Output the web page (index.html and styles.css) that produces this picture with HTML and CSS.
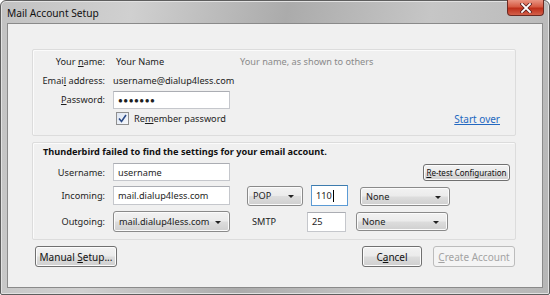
FILE: index.html
```html
<!DOCTYPE html>
<html lang="en">
<head>
  <meta charset="UTF-8">
  <meta name="viewport" content="width=device-width, initial-scale=1.0">
  <title>Mail Account Setup</title>
  <link rel="stylesheet" href="styles.css">
</head>
<body>
  <div class="window">
    <div class="titlebar">
      <div class="title">Mail Account Setup</div>
      <div class="close-btn">
        <svg width="12" height="10" viewBox="0 0 12 10">
          <path d="M2 1 L10 9 M10 1 L2 9" stroke="#5a2020" stroke-width="3.4" stroke-linecap="square"/>
          <path d="M2 1 L10 9 M10 1 L2 9" stroke="#fff" stroke-width="1.8" stroke-linecap="square"/>
        </svg>
      </div>
    </div>

    <div class="client">
      <div class="group identity">
        <div class="row">
          <div class="label">Your <u>n</u>ame:</div>
          <div class="value name-value">Your Name</div>
          <div class="hint">Your name, as shown to others</div>
        </div>
        <div class="row">
          <div class="label">Emai<u>l</u> address:</div>
          <div class="value">username@dialup4less.com</div>
        </div>
        <div class="row">
          <div class="label"><u>P</u>assword:</div>
          <div class="textbox password">&#9679;&#9679;&#9679;&#9679;&#9679;&#9679;&#9679;</div>
        </div>
        <div class="row">
          <div class="label"></div>
          <div class="checkbox">
            <svg width="9" height="9" viewBox="0 0 9 9">
              <path d="M1 4.5 L3.5 7.5 L8 1" fill="none" stroke="#2b4a86" stroke-width="1.6"/>
            </svg>
          </div>
          <div class="check-label">Re<u>m</u>ember password</div>
          <a class="start-over" href="#">Start over</a>
        </div>
      </div>

      <div class="group settings">
        <div class="message">Thunderbird failed to find the settings for your email account.</div>
        <div class="row row-user">
          <div class="label">Username:</div>
          <div class="textbox user">username</div>
          <div class="button retest"><span><u>R</u>e-test Configuration</span></div>
        </div>
        <div class="row row-in">
          <div class="label">Incoming:</div>
          <div class="textbox server">mail.dialup4less.com</div>
          <div class="dropdown proto">POP<span class="arrow"></span></div>
          <div class="textbox port focused">110<span class="caret"></span></div>
          <div class="dropdown ssl-in">None<span class="arrow"></span></div>
        </div>
        <div class="row row-out">
          <div class="label">Outgoing:</div>
          <div class="dropdown server-out">mail.dialup4less.com<span class="arrow"></span></div>
          <div class="smtp">SMTP</div>
          <div class="textbox port-out">25</div>
          <div class="dropdown ssl-out">None<span class="arrow"></span></div>
        </div>
      </div>

      <div class="buttons">
        <div class="button manual"><span>Manual <u>S</u>etup...</span></div>
        <div class="button cancel"><span>C<u>a</u>ncel</span></div>
        <div class="button create disabled"><span><u>C</u>reate Account</span></div>
      </div>
    </div>
  </div>
</body>
</html>
```

FILE: styles.css
```css
body {
  margin: 0;
  padding: 0;
  font-family: "Noto Sans", "Liberation Sans", sans-serif;
  font-size: 9.2px;
  color: #1e1e1e;
  background: #fff;
}

.window {
  width: 550px;
  height: 295px;
  box-sizing: border-box;
  border: 1px solid #5e5e5e;
  border-radius: 6px 6px 2px 2px;
  background: linear-gradient(100deg, #c2c2c2 0%, #d0d0d0 22%, #ababab 48%, #c6c6c6 72%, #b6b6b6 100%);
  box-shadow: inset 0 0 0 1px #e2e2e2;
}

.titlebar {
  height: 22px;
  display: flex;
  align-items: flex-start;
  justify-content: space-between;
}

.title {
  padding: 5px 0 0 6px;
  font-size: 10.2px;
  color: #111;
}

.close-btn {
  width: 37px;
  height: 16px;
  margin-right: 5px;
  margin-top: -1px;
  box-sizing: border-box;
  border: 1px solid #6b2a22;
  border-top: none;
  border-radius: 0 0 4px 4px;
  background: linear-gradient(#e99583 0%, #d65a43 45%, #be2f1a 55%, #d3604a 100%);
  display: flex;
  align-items: center;
  justify-content: center;
}

.client {
  margin: 0 6px 0 6px;
  height: 265px;
  box-sizing: border-box;
  border: 1px solid #8a8a8a;
  background: #f0f0f0;
  padding-top: 25px;
}

.group {
  margin-left: 24px;
  width: 484px;
  box-sizing: border-box;
  border: 1px solid #dcdcdc;
  box-shadow: inset 1px 1px 0 #fbfbfb;
  border-radius: 2px;
}

.identity {
  height: 87px;
  padding-top: 2px;
}

.settings {
  margin-top: 6px;
  height: 98px;
}

.row {
  display: flex;
  align-items: center;
  height: 19px;
}

.label {
  width: 72px;
  flex-shrink: 0;
  text-align: right;
  margin-right: 8px;
}

.value {
  color: #222;
}

.name-value {
  margin-left: 3px;
  width: 124px;
}

.hint {
  color: #8a8a8a;
}

.textbox {
  box-sizing: border-box;
  height: 18px;
  border: 1px solid #c5c7cc;
  border-top-color: #abadb3;
  background: #fff;
  padding: 0 4px;
  display: flex;
  align-items: center;
}

.password {
  width: 117px;
  font-size: 8px;
  letter-spacing: 0.5px;
}

.checkbox {
  width: 11px;
  height: 11px;
  margin-left: 3px;
  border: 1px solid #8f8f8f;
  background: linear-gradient(135deg, #dde5f2, #f6f8fb);
  display: flex;
  align-items: center;
  justify-content: center;
}

.check-label {
  margin-left: 5px;
}

.start-over {
  margin-left: auto;
  margin-right: 15px;
  font-size: 10px;
  color: #2468c0;
}

.message {
  height: 18px;
  line-height: 18px;
  padding-left: 10px;
  font-weight: bold;
  color: #111;
}

.row-user {
  margin-top: 2px;
  height: 18px;
}

.row-in {
  margin-top: 4px;
  height: 21px;
}

.row-out {
  margin-top: 5px;
  height: 21px;
}

.user,
.server {
  width: 117px;
}

.server {
  height: 19px;
}

.button {
  box-sizing: border-box;
  border: 1px solid #707070;
  border-radius: 3px;
  background: linear-gradient(#f2f2f2 0%, #ebebeb 48%, #dddddd 52%, #cfcfcf 100%);
  box-shadow: inset 0 0 0 1px #fcfcfc;
  display: flex;
  align-items: center;
  justify-content: center;
  color: #111;
}

.retest {
  margin-left: auto;
  margin-right: 5px;
  width: 87px;
  height: 17px;
  font-size: 8px;
}

.dropdown {
  position: relative;
  box-sizing: border-box;
  border: 1px solid #8a8a8a;
  border-radius: 3px;
  background: linear-gradient(#f2f2f2 0%, #ebebeb 48%, #dddddd 52%, #cfcfcf 100%);
  box-shadow: inset 0 0 0 1px #fbfbfb;
  display: flex;
  align-items: center;
  padding-left: 5px;
  color: #222;
}

.arrow {
  position: absolute;
  right: 8px;
  top: 50%;
  margin-top: -1px;
  border-left: 3px solid transparent;
  border-right: 3px solid transparent;
  border-top: 3px solid #222;
}

.proto {
  margin-left: 17px;
  width: 56px;
  height: 20px;
}

.port {
  margin-left: 8px;
  width: 37px;
  height: 21px;
}

.focused {
  border-color: #5b9bd5;
  border-top-color: #3d7bad;
}

.caret {
  width: 1px;
  height: 12px;
  background: #000;
  margin-left: 1px;
}

.ssl-in {
  margin-left: 12px;
  width: 90px;
  height: 19px;
  margin-top: 2px;
}

.server-out {
  width: 117px;
  height: 21px;
}

.smtp {
  margin-left: 22px;
  width: 55px;
}

.port-out {
  width: 39px;
  height: 20px;
}

.ssl-out {
  margin-left: 10px;
  width: 92px;
  height: 19px;
}

.buttons {
  display: flex;
  margin-top: 6px;
  padding-left: 27px;
}

.buttons .button {
  height: 21px;
  font-size: 10px;
}

.manual {
  width: 82px;
}

.cancel {
  margin-left: auto;
  width: 60px;
}

.create {
  margin-left: 11px;
  margin-right: 27px;
  width: 82px;
}

.disabled {
  color: #a3a3a3;
  border-color: #bcbcbc;
  background: #f4f4f4;
  box-shadow: none;
}
```
